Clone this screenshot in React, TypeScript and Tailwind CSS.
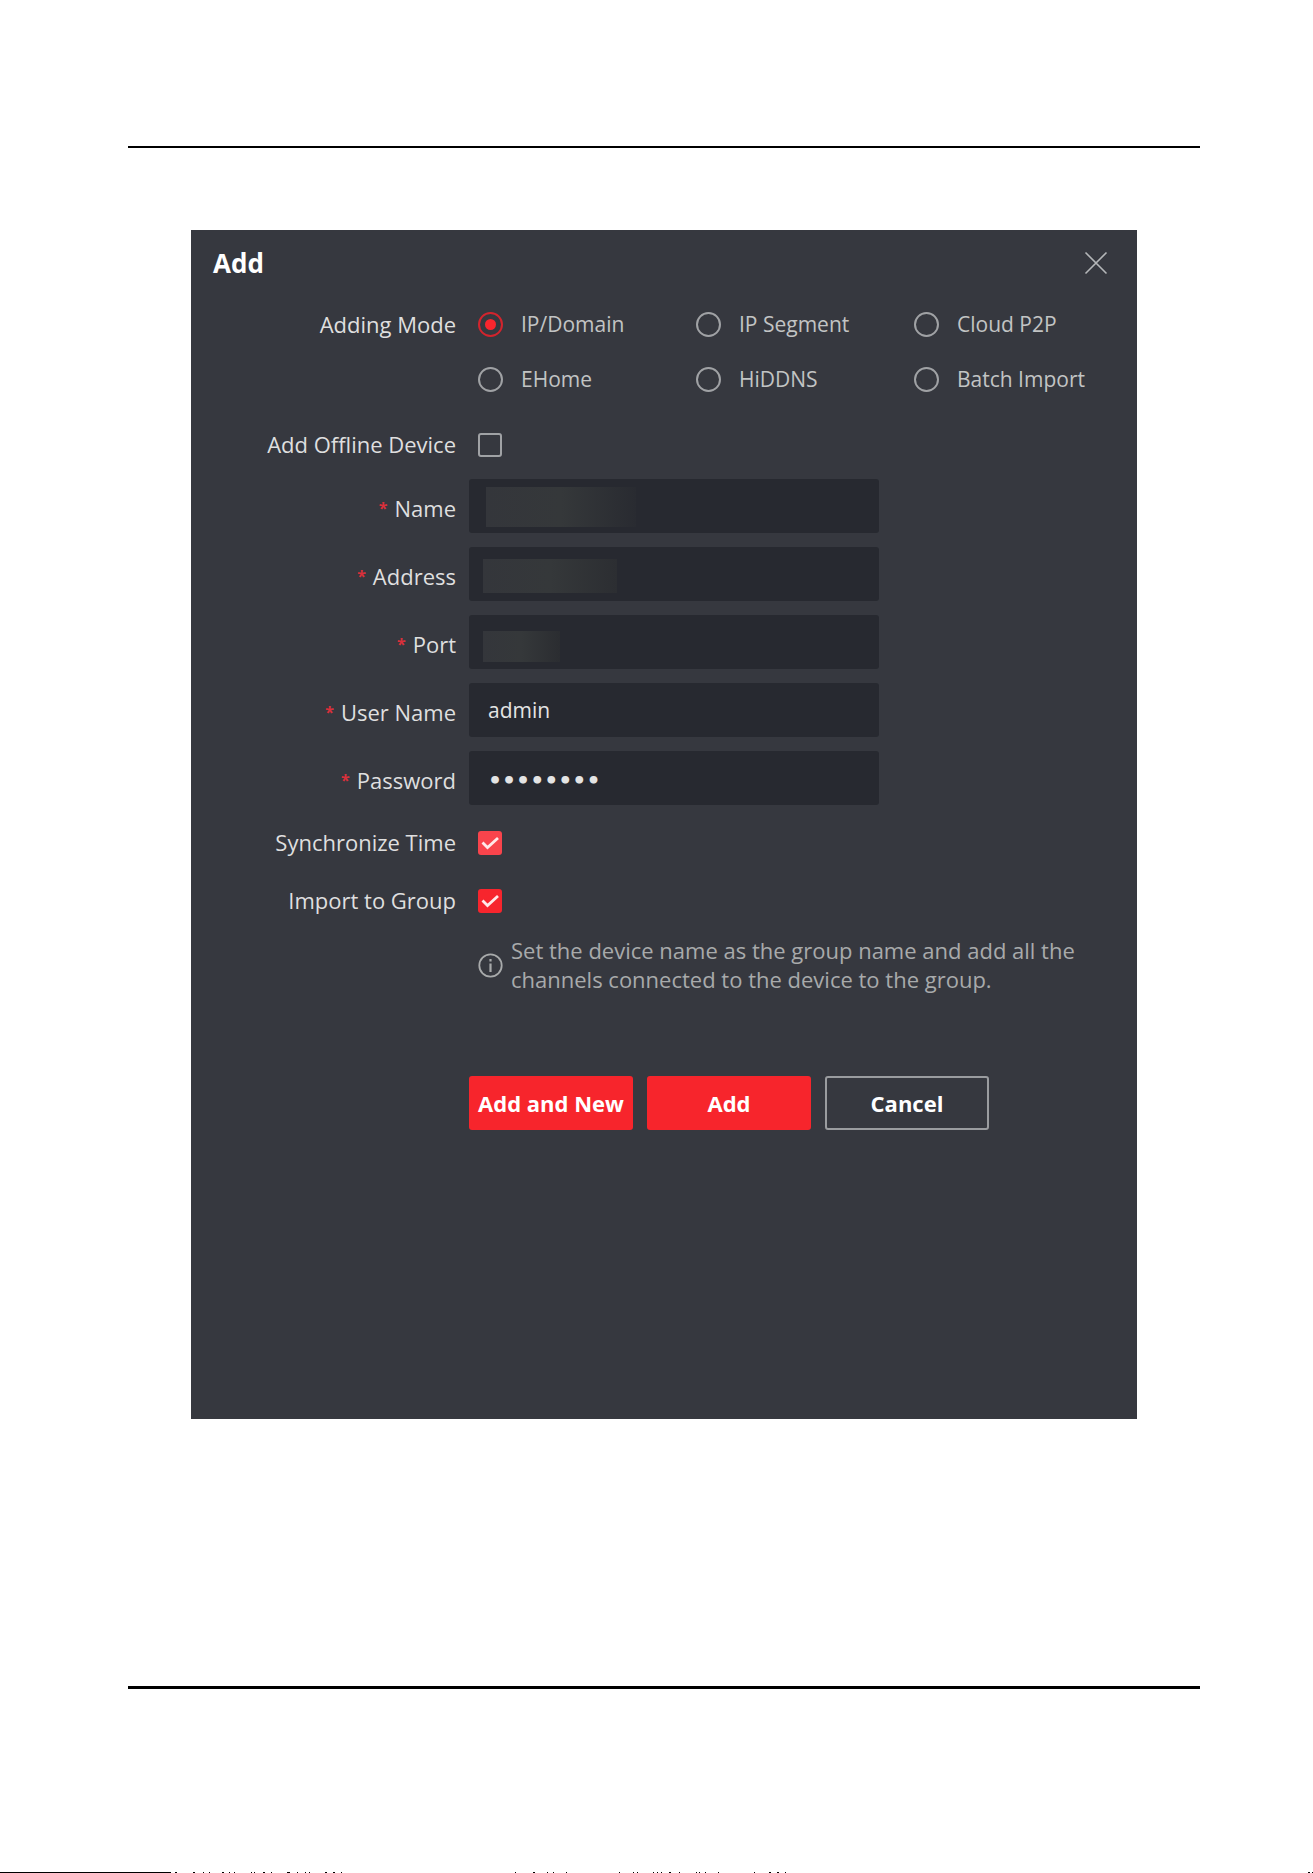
import { useState } from "react"

interface FieldProps {
  id: string
  label: string
  type?: string
  value?: string
  maskClass?: string
  inputClass?: string
}

const modes = ["IP/Domain", "IP Segment", "Cloud P2P", "EHome", "HiDDNS", "Batch Import"]

// [x, width] of the specks along the foot of the page
const specks = [
  [175, 2], [193, 2], [203, 1], [209, 1], [222, 2], [229, 1], [234, 1], [251, 1], [254, 1],
  [263, 2], [271, 1], [287, 3], [297, 1], [305, 1], [309, 1], [325, 2], [333, 2], [341, 1],
  [515, 1], [533, 2], [547, 1], [553, 1], [566, 1], [619, 1], [633, 1], [637, 1], [653, 1],
  [657, 1], [661, 1], [669, 2], [679, 1], [696, 1], [699, 1], [705, 1], [718, 1], [754, 1],
  [769, 2], [777, 2], [785, 1], [1308, 2], [1312, 1],
]

const Field = ({ id, label, type = "text", value = "", maskClass, inputClass = "text-[21px]" }: FieldProps) => {
  const [text, setText] = useState(value)

  return (
    <div className="grid grid-cols-[265px_minmax(0,410px)] items-center gap-[13px]">
      <label htmlFor={id} className="flex justify-end gap-[7px] pt-1">
        <span className="pt-[6px] text-base leading-none font-bold text-[#d9303b]">*</span>
        {label}
      </label>
      <div className="relative">
        <input
          id={id}
          type={type}
          value={text}
          onChange={(e) => setText(e.target.value)}
          className={`block h-[54px] w-full rounded-[3px] bg-[#272930] px-[19px] text-[#e4e4e4] focus:outline-none ${inputClass}`}
        />
        {maskClass && <span className={`absolute bg-linear-to-r ${maskClass}`} />}
      </div>
    </div>
  )
}

interface CheckProps {
  id: string
  label: string
  defaultChecked?: boolean
  boxClass?: string
}

const Check = ({ id, label, defaultChecked, boxClass = "checked:bg-[#f7252d]" }: CheckProps) => (
  <div className="grid grid-cols-[265px_1fr] items-center gap-[13px]">
    <label htmlFor={id} className="text-right">
      {label}
    </label>
    <div className="relative ml-[9px] size-6">
      <input
        id={id}
        type="checkbox"
        defaultChecked={defaultChecked}
        className={`peer block size-6 appearance-none rounded-[3px] border-2 border-[#a0a2a5] checked:border-0 ${boxClass}`}
      />
      <svg
        viewBox="0 0 24 24"
        className="pointer-events-none absolute inset-0 hidden size-6 peer-checked:block"
        fill="none"
        stroke="#ffe9e9"
        strokeWidth={2.8}
      >
        <path d="M4.5 11.5l5 5L20 7" />
      </svg>
    </div>
  </div>
)

export default function App() {
  const [mode, setMode] = useState("IP/Domain")

  return (
    <div className="flex min-h-screen flex-col bg-white font-['Open_Sans','Noto_Sans',sans-serif] text-[22px] leading-[29px]">
      <main className="mt-[146px] mr-[113px] ml-[128px] border-t-2 border-b-3 border-black px-[63px] pt-[82px] pb-[267px]">
        <section className="bg-[#36383f] pb-[289px] text-[#dfdfdf]">
          <header className="flex items-center justify-between pt-[15px] pr-[29px] pl-[22px]">
            <h1 className="text-[26px] leading-9 font-bold text-white">Add</h1>
            <button type="button" aria-label="Close">
              <svg className="size-6" viewBox="0 0 24 24" fill="none" stroke="#b4b6b8" strokeWidth={1.6}>
                <path d="M1.5 1.5l21 21M22.5 1.5l-21 21" />
              </svg>
            </button>
          </header>

          <form onSubmit={(e) => e.preventDefault()}>
            <div
              role="radiogroup"
              aria-labelledby="mode-label"
              className="mt-[29px] grid grid-cols-[265px_1fr] gap-[13px]"
            >
              <span id="mode-label" className="text-right">
                Adding Mode
              </span>
              <div className="ml-[9px] grid grid-cols-[218px_218px_1fr] gap-y-[26px] text-[21px] text-[#c2c4c4]">
                {modes.map((m) => (
                  <label key={m} className="flex items-center gap-[18px] whitespace-nowrap">
                    <input
                      type="radio"
                      name="mode"
                      checked={mode === m}
                      onChange={() => setMode(m)}
                      className="grid size-[25px] shrink-0 appearance-none place-items-center rounded-full border-2 border-[#a0a2a5] before:size-[11px] before:rounded-full checked:border-[#d3242d] checked:before:bg-[#f9262e]"
                    />
                    {m}
                  </label>
                ))}
              </div>
            </div>

            <div className="mt-9">
              <Check id="offline" label="Add Offline Device" />
            </div>

            <div className="mt-5 flex flex-col gap-[14px]">
              <Field
                id="name"
                label="Name"
                maskClass="top-2 left-[17px] h-10 w-[150px] from-[#34363b] via-[#35383a] to-[#292b31]"
              />
              <Field
                id="address"
                label="Address"
                maskClass="top-3 left-[14px] h-[34px] w-[134px] from-[#34363b] via-[#35383a] to-[#2c2e32]"
              />
              <Field
                id="port"
                label="Port"
                maskClass="top-4 left-[14px] h-[31px] w-[77px] from-[#34363b] via-[#35383a] to-[#2b2d31]"
              />
              <Field id="user" label="User Name" value="admin" />
              <Field
                id="password"
                label="Password"
                type="password"
                value="password"
                inputClass="pt-1 font-['DejaVu_Sans'] text-[22px] font-bold"
              />
            </div>

            <div className="mt-[23px] flex flex-col gap-[29px]">
              <Check id="sync" label="Synchronize Time" defaultChecked boxClass="checked:bg-[#f9444c]" />
              <Check id="import" label="Import to Group" defaultChecked />
            </div>

            <div className="mt-[21px] ml-[287px] flex items-center gap-2 text-[#a8aaab]">
              <svg className="size-[25px] shrink-0" viewBox="0 0 25 25" fill="none" stroke="currentColor" strokeWidth={1.8}>
                <circle cx="12.5" cy="12.5" r="11.2" />
                <path d="M12.5 10.5v8.5M12.5 6v2.4" strokeWidth={2.2} />
              </svg>
              <p className="max-w-[580px]">
                Set the device name as the group name and add all the channels connected to the device to the group.
              </p>
            </div>

            <div className="mt-[82px] ml-[278px] flex gap-[14px] font-bold text-white">
              <button type="submit" className="h-[54px] w-[164px] rounded-[3px] bg-[#f7252c]">
                Add and New
              </button>
              <button type="submit" className="h-[54px] w-[164px] rounded-[3px] bg-[#f7252c]">
                Add
              </button>
              <button type="button" className="h-[54px] w-[164px] rounded-[3px] border-2 border-[#9a9c9f]">
                Cancel
              </button>
            </div>
          </form>
        </section>
      </main>

      <footer className="mt-auto">
        <svg className="block h-px w-full" viewBox="0 0 1313 1" preserveAspectRatio="none" aria-hidden="true">
          <rect width="171" height="1" />
          {specks.map(([x, w]) => (
            <rect key={x} x={x} width={w} height="1" />
          ))}
        </svg>
      </footer>
    </div>
  )
}
